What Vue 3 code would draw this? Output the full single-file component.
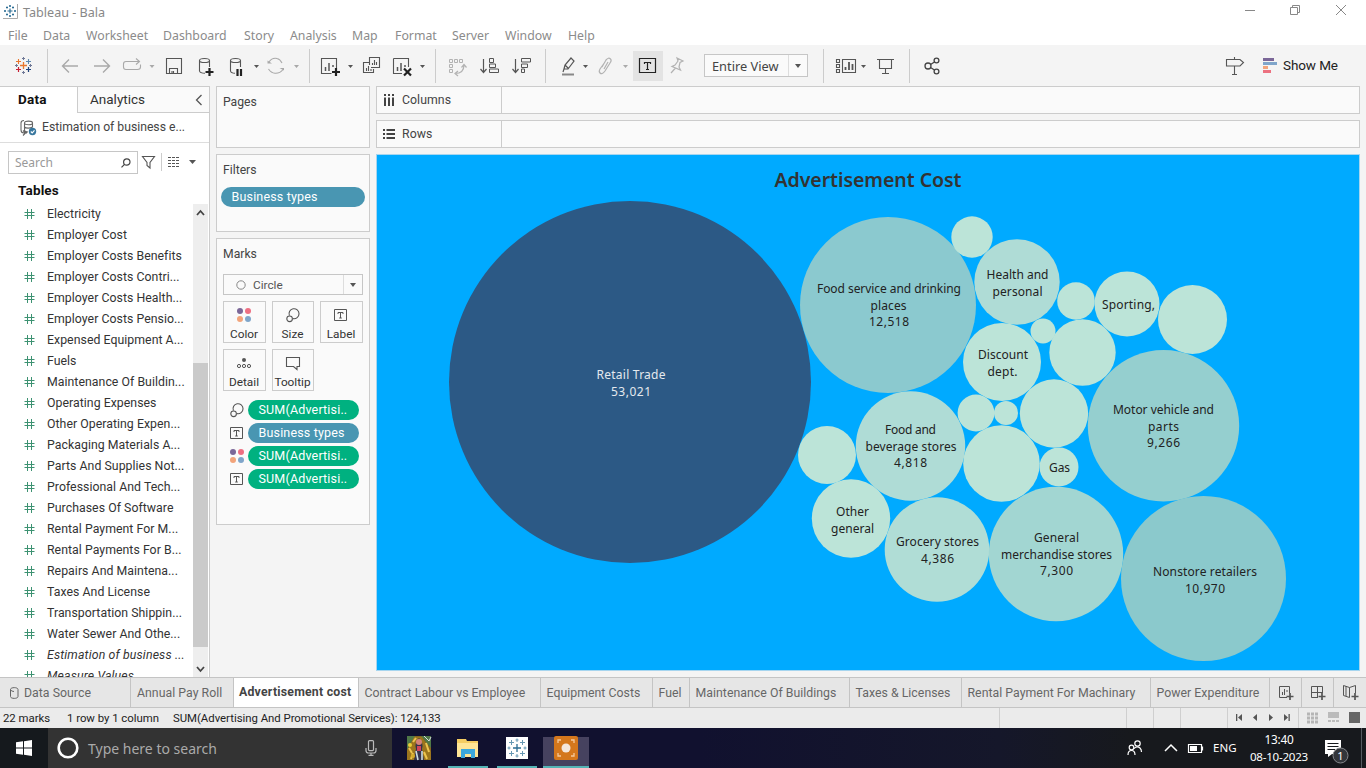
<script setup>
const menus = [
  ['File', 35], ['Data', 43], ['Worksheet', 77], ['Dashboard', 81], ['Story', 46], ['Analysis', 62],
  ['Map', 43], ['Format', 57], ['Server', 53], ['Window', 63], ['Help', 40],
]
const fields = [
  'Electricity', 'Employer Cost', 'Employer Costs Benefits', 'Employer Costs Contri...',
  'Employer Costs Health...', 'Employer Costs Pensio...', 'Expensed Equipment A...', 'Fuels',
  'Maintenance Of Buildin...', 'Operating Expenses', 'Other Operating Expen...',
  'Packaging Materials A...', 'Parts And Supplies Not...', 'Professional And Tech...',
  'Purchases Of Software', 'Rental Payment For M...', 'Rental Payments For B...',
  'Repairs And Maintena...', 'Taxes And License', 'Transportation Shippin...',
  'Water Sewer And Othe...', 'Estimation of business ...', 'Measure Values',
]
const bubbles = [
  [630, 382, 181, '#2c5985'], [888, 305, 88, '#8bc9cf'], [972, 237, 20.7, '#bce4d8'],
  [1017, 282, 42.7, '#afdcd6'], [1076, 301, 18.8, '#bce4d8'], [1127, 304, 32.5, '#bce4d8'],
  [1192.5, 319.5, 34.5, '#bce4d8'], [1043, 331, 12.5, '#bce4d8'], [1082.5, 352.5, 33.2, '#bce4d8'],
  [1002, 362, 39, '#bce4d8'], [1054, 413.5, 34.2, '#bce4d8'], [1006, 413, 12, '#bce4d8'],
  [976, 413, 18.4, '#bce4d8'], [1001.5, 463.5, 38.3, '#bce4d8'], [1059, 467, 19.5, '#bce4d8'],
  [1163.5, 425.7, 75.7, '#95cfcf'], [910.5, 446, 54.7, '#afdcd6'], [827, 455, 29, '#bce4d8'],
  [851, 518.5, 39.2, '#bce4d8'], [937, 549.5, 52.3, '#b0ddd6'], [1056, 554, 67.2, '#a2d6d2'],
  [1203.5, 578.5, 82.5, '#8bc9cc'],
]
const labels = [
  ['Retail Trade', 631, 379, 69, 1], ['53,021', 631, 396, 40, 1],
  ['Food service and drinking', 889, 293, 144], ['places', 888.5, 310, 36], ['12,518', 889, 326, 40],
  ['Health and', 1017.5, 279, 62], ['personal', 1017.5, 296, 50],
  ['Sporting,', 1128.5, 309, 53], ['Discount', 1003, 359, 50], ['dept.', 1002.5, 376, 30],
  ['Motor vehicle and', 1163.5, 414, 101], ['parts', 1163.5, 431, 31], ['9,266', 1163.5, 447, 33],
  ['Food and', 910.5, 434, 51], ['beverage stores', 911, 451, 91], ['4,818', 910.5, 467, 33],
  ['Gas', 1059.5, 472, 21], ['Other', 852.5, 516, 33], ['general', 852.5, 533, 43],
  ['Grocery stores', 937.5, 546, 83], ['4,386', 937.5, 563, 33],
  ['General', 1056.5, 542, 45], ['merchandise stores', 1056.5, 559, 111], ['7,300', 1056.5, 575, 33],
  ['Nonstore retailers', 1205, 576, 104], ['10,970', 1205, 593, 40],
]
const pills = [
  ['size', 'SUM(Advertisi..', true], ['label', 'Business types', false],
  ['color', 'SUM(Advertisi..', true], ['label', 'SUM(Advertisi..', true],
]
const marks = [['color', 'Color'], ['size', 'Size'], ['label', 'Label'], ['detail', 'Detail'], ['tooltip', 'Tooltip']]
const tabs = [
  ['Annual Pay Roll', 103], ['Advertisement cost', 125], ['Contract Labour vs Employee', 182],
  ['Equipment Costs', 112], ['Fuel', 37], ['Maintenance Of Buildings', 160], ['Taxes & Licenses', 112],
  ['Rental Payment For Machinary', 189], ['Power Expenditure', 119],
]
</script>

<template>
  <div class="screen">
    <svg class="defs" width="0" height="0">
      <symbol id="g-color" viewBox="0 0 16 16">
        <circle cx="4" cy="4" r="3" fill="#7b6798" /><circle cx="12" cy="4" r="3" fill="#ee6f82" />
        <circle cx="4" cy="12" r="3" fill="#f2a47b" /><circle cx="12" cy="12" r="3" fill="#7fa5ca" />
      </symbol>
      <symbol id="g-size" viewBox="0 0 16 16">
        <path d="M4.4 8.6A5 5 0 1 1 8 11.6" fill="none" stroke="#555" stroke-width="1.1" />
        <circle cx="4.600" cy="11.800" r="2.800" fill="none" stroke="#555" stroke-width="1.1" />
      </symbol>
      <symbol id="g-label" viewBox="0 0 16 16">
        <path d="M1.500 2.500H13.500V13.500H1.500ZM5 7V5.500H10V7M7.500 5.500V11M6.200 11H8.800" fill="none" stroke="#555" />
      </symbol>
      <symbol id="g-detail" viewBox="0 0 16 16">
        <circle cx="8" cy="5" r="2" fill="#555" />
        <g fill="none" stroke="#555"><circle cx="3" cy="11" r="1.600" /><circle cx="8" cy="11" r="1.600" /><circle cx="13" cy="11" r="1.600" /></g>
      </symbol>
      <symbol id="g-tooltip" viewBox="0 0 16 16">
        <path d="M1.500 2.500H14.500V11.500H12V14.500L8.500 11.500H1.500Z" fill="none" stroke="#555" stroke-width="1.1" />
      </symbol>
    </svg>

    <header class="titlebar">
      <svg class="applogo" width="15" height="15" viewBox="0 0 15 15">
        <path d="M0 14.500H14.500V0" fill="none" stroke="#aaa" />
        <path d="M7 4.500V9.500M4.500 7H9.500M7 1V3M6 2H8M7 11V13M6 12H8M2 6V8M1 7H3M12 6V8M11 7H13M4 2.500V4.500M3 3.500H5M10 2.500V4.500M9 3.500H11M4 9.500V11.500M3 10.500H5M10 9.500V11.500M9 10.500H11" stroke="#2b6d94" stroke-width="1.200" fill="none" />
      </svg>
      <span class="apptitle">Tableau - Bala</span>
      <svg class="winctl" width="126" height="24" viewBox="1240 0 126 24" fill="none" stroke="#888">
        <path d="M1245 10.500H1255M1290.500 7.500H1297.500V14.500H1290.500ZM1292.500 7V5.500H1299.500V12.500H1298M1336 5L1346 15M1346 5L1336 15" />
      </svg>
    </header>

    <nav class="menubar">
      <span v-for="m in menus" :key="m[0]" :style="{ width: m[1] + 'px' }">{{ m[0] }}</span>
    </nav>

    <div class="toolbar">
      <svg width="48" height="41" viewBox="0 45 48 41" fill="none">
        <path d="M23.500 62V69M20 65.500H27" stroke="#e8762d" stroke-width="1.300" />
        <path d="M18.500 59V64M16 61.500H21M28.500 67V72M26 69.500H31" stroke="#e8762d" stroke-width="1.100" />
        <path d="M18.500 67V72M16 69.500H21" stroke="#c72035" stroke-width="1.200" />
        <path d="M28.500 59V64M26 61.500H31" stroke="#5c86ad" stroke-width="1.100" />
        <path d="M28.500 67V72M26 69.500H31" stroke="#1f447e" stroke-width="1.200" />
        <path d="M23.500 57V60M22 58.500H25M23.500 71V74M22 72.500H25M16.500 64V67M15 65.500H18M30.500 64V67M29 65.500H32" stroke="#6f7896" />
        <path d="M47.500 49V83" stroke="#ccc" />
      </svg>
      <svg width="262" height="41" viewBox="48 45 262 41" fill="none">
        <g stroke="#a9a9a9" stroke-width="1.400">
          <path d="M78 66H63M69 59.500L62.500 66L69 72.500M94 66H109M103 59.500L109.500 66L103 72.500" />
          <path d="M130 61.500H126Q123.500 61.500 123.500 64V67Q123.500 69.500 126 69.500H137.500Q140.500 69.500 140.500 67V64.500M130 61.500H139M136 58.500L139.500 61.500L136 64.500" stroke-width="1.100" />
          <path d="M269 62Q272 57.500 277 58.500Q280 59 282 63M283 69.500Q280 73.500 275 73.200Q271 73 268.500 69" stroke-width="1.100" />
        </g>
        <g fill="#a9a9a9"><path d="M267.500 60.500L272 63.500H267.500ZM284 70.500L279.500 68H284Z" /><path d="M149.500 65h5l-2.500 3zM294 65h5l-2.500 3z" /></g>
        <path d="M254 65h5l-2.500 3z" fill="#555" />
        <g stroke="#555" stroke-width="1.100">
          <path d="M166.500 58.500H181.500V73.500H166.500ZM169.500 73V68.500H177.500V73M172 73V71M173.500 73V71" />
          <path d="M199.500 60.500C199.500 57.800 209.500 57.800 209.500 60.500C209.500 63.200 199.500 63.200 199.500 60.500V71Q200 73.200 205 73.200M209.500 60.500V67" />
          <path d="M230.500 60.500C230.500 57.800 240.500 57.800 240.500 60.500C240.500 63.200 230.500 63.200 230.500 60.500V71Q231 73.200 235 73.200M240.500 60.500V67" />
        </g>
        <path d="M209.500 68V76M205.500 72H213.500M237.500 69V76M241 69V76" stroke="#222" stroke-width="2.200" />
        <path d="M309.500 49V83" stroke="#ccc" />
      </svg>
      <svg width="126" height="41" viewBox="310 45 126 41" fill="none">
        <g stroke="#555" stroke-width="1.100">
          <path d="M331.500 73.500H321.500V58.500H336.500V68M393.500 58.500H408.500V67M402 73.500H393.500V58.500" />
          <path d="M371 67.500H379.500V57.500H369.500V65M369 62.500H363.500V72.500H373.500V69" />
          <path d="M372.500 65V63M374.500 65V60M376.500 65V62M366.500 71V68M368.500 71V66M371 71V69" />
        </g>
        <path d="M325.500 71V67M329 71V63M333 67V65M397.500 71V67M401 71V63M405 67V65" stroke="#555" stroke-width="1.500" />
        <path d="M336 68V76M332 72H340M404 68.500L411 75.500M411 68.500L404 75.500" stroke="#222" stroke-width="2.200" />
        <path d="M348 65h5l-2.500 3zM420 65h5l-2.500 3z" fill="#555" />
        <path d="M435.500 49V83" stroke="#ccc" />
      </svg>
      <svg width="110" height="41" viewBox="436 45 110 41" fill="none">
        <g stroke="#b2b2b2">
          <path d="M449.500 59.500h3v3h-3zM454.500 59.500h3v3h-3zM459.500 59.500h3v3h-3zM449.500 64.500h3v3h-3zM449.500 69.500h3v3h-3z" />
          <path d="M464 65Q464 73.500 455 73.500M461.500 67.500L464 64.500L466.500 67.500M458 71L455 73.500L458 76" stroke-width="1.200" />
        </g>
        <g stroke="#555" stroke-width="1.200">
          <path d="M483.500 59V72M480.500 69L483.500 72.500L486.500 69M515.500 59V72M512.500 69L515.500 72.500L518.500 69" />
          <path d="M489.500 58.500h4v4h-4zM489.500 64h6v3.500h-6zM489.500 69h9v3.500h-9zM521.500 58.500h9v3.500h-9zM521.500 64h6v3.500h-6zM521.500 69h3v3.500h-3z" stroke-width="1" />
        </g>
        <path d="M545.500 49V83" stroke="#ccc" />
      </svg>
      <svg width="158" height="41" viewBox="546 45 158 41" fill="none">
        <path d="M633 51H663V81H633Z" fill="#e3e3e3" />
        <path d="M564 69L565 65L571 58L574 61L568 69ZM565 65L568.500 68.500M564 69L563 72" stroke="#555" stroke-width="1.200" />
        <path d="M562 74.500H574" stroke="#888" stroke-width="2" />
        <path d="M583 65h5l-2.500 3z" fill="#555" /><path d="M623 65h5l-2.500 3z" fill="#aaa" />
        <path d="M602 67L606 60Q608.500 57 610.500 59Q612 60.500 610 63L605 71Q602 75 600 73Q598.500 71.500 600 69L605 62M604 69L608 62" stroke="#b2b2b2" stroke-width="1.200" />
        <path d="M639.500 58.500H655.500V72.500H639.500ZM644.500 64V62.500H650.500V64M647.500 62.500V69.500M646 69.500H649" stroke="#222" stroke-width="1.200" />
        <path d="M677 58L683 61L680 62.500L679 67L680.500 70L672 66.500L675 65L678 61ZM675.500 68L671 73" stroke="#b2b2b2" stroke-width="1.200" />
      </svg>
      <div class="viewselect"><span>Entire View</span><i></i></div>
      <svg width="102" height="41" viewBox="808 45 102 41" fill="none">
        <path d="M823.500 49V83M909.500 49V83" stroke="#ccc" />
        <path d="M836.500 59.500h3v3h-3zM836.500 64.500h3v3h-3zM836.500 69.500h3v3h-3zM842.500 59.500H855.500V72.500H842.500ZM877 59.500H894M879.500 60V68.500H891.500V60M885.500 69V73M882 73.500H889" stroke="#555" stroke-width="1.100" />
        <path d="M845.500 70V67M849 70V62M852.500 70V64" stroke="#555" stroke-width="1.800" />
        <path d="M861 65h5l-2.500 3z" fill="#555" />
      </svg>
      <svg width="310" height="41" viewBox="910 45 310 41" fill="none">
        <g stroke="#444" stroke-width="1.300"><circle cx="928" cy="66" r="3" /><circle cx="936.500" cy="60.500" r="2.400" /><circle cx="936.500" cy="71.500" r="2.400" /><path d="M930.500 64.500L934.500 62M930.500 67.500L934.500 70" /></g>
      </svg>
      <svg width="63" height="41" viewBox="1220 45 63 41" fill="none">
        <path d="M1234.500 57V59M1226.500 59.500H1240L1243.500 62.500L1240 66H1226.500ZM1234.500 66V74M1232 74.500H1237" stroke="#555" stroke-width="1.100" />
        <path d="M1263 58h11v3h-11z" fill="#7b6798" /><path d="M1263 62h14v3h-14z" fill="#7fa5ca" /><path d="M1263 66h5v3h-5z" fill="#f2a47b" /><path d="M1263 70h8v3h-8z" fill="#ec7180" />
      </svg>
      <span class="showme">Show Me</span>
    </div>

    <main class="work">
      <aside class="side">
        <div class="sidetabs"><b>Data</b><span>Analytics</span>
          <svg width="14" height="26" viewBox="0 0 14 26" fill="none"><path d="M6.500 8L1.500 13L6.500 18" stroke="#555" stroke-width="1.300" /><path d="M0 25.500H14" stroke="#ccc" /></svg>
        </div>
        <div class="source">
          <svg width="17" height="17" viewBox="0 0 17 17" fill="none" stroke="#666" stroke-width="1.100">
            <path d="M4.500 4C4.500 1.500 12.500 1.500 12.500 4C12.500 6.300 4.500 6.300 4.500 4V8C6 9.500 10 9.500 12.500 8V4M4 1.500Q1 1.500 1 4V11Q1 14 4 14H7M4.500 8V11.500Q5 13 8 13M3 11.500L5.500 14L3 16.500" />
            <circle cx="12.500" cy="12.500" r="3.700" fill="#38779e" stroke="none" /><path d="M10.800 12.500L12.200 13.900L14.500 11.300" stroke="#fff" />
          </svg>
          <span>Estimation of business e...</span>
        </div>
        <div class="searchrow">
          <div class="search"><span>Search</span>
            <svg width="10" height="10" viewBox="0 0 10 10" fill="none" stroke="#444" stroke-width="1.200"><circle cx="5.800" cy="4" r="3.200" /><path d="M3.500 6.300L.5 9.300" /></svg>
          </div>
          <svg width="60" height="22" viewBox="138 151 60 22" fill="none">
            <path d="M142.500 156.500H154.500L150 162.500V168L147 165.500V162.500Z" stroke="#555" stroke-width="1.100" />
            <path d="M161.500 153V171" stroke="#ccc" />
            <path d="M168 157.500H180M168 160.500H180M168 163.500H180M168 166.500H180" stroke="#555" stroke-dasharray="3 1" />
            <path d="M189 160h7l-3.500 4z" fill="#555" />
          </svg>
        </div>
        <h3>Tables</h3>
        <div class="listwrap">
          <ul>
            <li v-for="(f, i) in fields" :key="f" :class="{ calc: i > 20 }">
              <svg width="11" height="10" viewBox="0 0 11 10"><path d="M3.500 0V10M7.500 0V10M.5 3.500H10.500M.5 6.500H10.500" stroke="#3d9272" fill="none" /></svg>
              <span>{{ f }}</span>
            </li>
          </ul>
          <div class="scroll">
            <svg width="15" height="16" viewBox="0 0 15 16"><path d="M4 11L7.500 7L11 11" fill="none" stroke="#444" stroke-width="1.800" /></svg>
            <div class="thumb"></div>
            <svg width="15" height="16" viewBox="0 0 15 16"><path d="M4 6L7.500 10L11 6" fill="none" stroke="#444" stroke-width="1.800" /></svg>
          </div>
        </div>
      </aside>

      <section class="cards">
        <div class="card pages"><h4>Pages</h4></div>
        <div class="card filters"><h4>Filters</h4><div class="pill dim">Business types</div></div>
        <div class="card marks">
          <h4>Marks</h4>
          <div class="marktype"><svg width="10" height="10" viewBox="0 0 10 10"><circle cx="5" cy="5" r="4.200" fill="none" stroke="#888" /></svg><span>Circle</span><i></i></div>
          <div class="markgrid">
            <div v-for="m in marks" :key="m[0]" class="markbtn"><svg width="16" height="16"><use :href="'#g-' + m[0]" /></svg><span>{{ m[1] }}</span></div>
          </div>
          <div v-for="(p, i) in pills" :key="i" class="shelf">
            <svg width="16" height="16"><use :href="'#g-' + p[0]" /></svg>
            <div class="pill" :class="p[2] ? 'mea' : 'dim'">{{ p[1] }}</div>
          </div>
        </div>
      </section>

      <section class="view">
        <div class="rail"><div class="railname">
          <svg width="12" height="12" viewBox="0 0 12 12"><path d="M2 0V2M6 0V2M10 0V2M2 3.500V12M6 3.500V12M10 3.500V12" stroke="#444" stroke-width="2" /></svg>Columns</div></div>
        <div class="rail"><div class="railname">
          <svg width="12" height="12" viewBox="0 0 12 12"><path d="M0 2H2M0 6H2M0 10H2M3.500 2H12M3.500 6H12M3.500 10H12" stroke="#444" stroke-width="2" /></svg>Rows</div></div>
        <div class="canvas">
          <svg width="982" height="515" viewBox="377 155 982 515">
            <text class="charttitle" x="868" y="187" textLength="187" text-anchor="middle">Advertisement Cost</text>
            <circle v-for="(b, i) in bubbles" :key="i" :cx="b[0]" :cy="b[1]" :r="b[2]" :fill="b[3]" />
            <text v-for="(l, i) in labels" :key="'t' + i" class="lab" :class="{ light: l[4] }" :x="l[1]" :y="l[2]" :textLength="l[3]" text-anchor="middle">{{ l[0] }}</text>
          </svg>
        </div>
      </section>
    </main>

    <div class="tabs">
      <div class="tab ds"><svg width="9" height="12" viewBox="0 0 9 12" fill="none" stroke="#666"><path d="M.5 2.500C.5 0 8 0 8 2.500V9.500C8 12 .5 12 .5 9.500ZM.5 2.500Q1 4.500 4 4.500" /></svg>Data Source</div>
      <div v-for="(t, i) in tabs" :key="t[0]" class="tab" :class="{ on: i === 1 }" :style="{ width: t[1] + 'px' }">{{ t[0] }}</div>
      <svg width="96" height="30" viewBox="1270 678 96 30" fill="none" stroke="#555">
        <path d="M1301.500 678V708M1333.500 678V708" stroke="#c4c4c4" />
        <path d="M1287 697.500H1279.500V686.500H1289.500V693M1282.500 695V692M1284.500 695V689M1287 692V690" />
        <path d="M1318 697.500H1311.500V686.500H1322.500V693M1317.500 686.500V697M1311.500 692.500H1322" />
        <path d="M1349.500 687.500L1343.500 685.500V695.500L1349.500 697.500ZM1349.500 687.500L1355.500 685.500V693M1346 686V696" />
        <path d="M1290 693V700M1286.500 696.500H1293.500M1322 693V700M1318.500 696.500H1325.500M1355 693V700M1351.500 696.500H1358.500" stroke-width="1.700" />
      </svg>
    </div>

    <div class="status">
      <span class="s1">22 marks</span><span class="s2">1 row by 1 column</span><span class="s3">SUM(Advertising And Promotional Services): 124,133</span>
      <svg width="367" height="20" viewBox="999 708 367 20">
        <path d="M999.500 708V728M1126.500 708V728M1153.500 708V728M1180.500 708V728M1227.500 708V728M1298.500 708V728" stroke="#cfcfcf" fill="none" />
        <g fill="#555"><path d="M1236 714h1.300v7h-1.300zM1242 714v7l-4-3.500zM1257 714v7l-4-3.500zM1269 714v7l4-3.500zM1284 714v7l4-3.500zM1288.500 714h1.300v7h-1.300z" /></g>
        <path d="M1307 714H1318M1307 718H1318M1307 722H1318" stroke="#b5b5b5" stroke-width="3" stroke-dasharray="3 1" />
        <path d="M1328 712h11v6h-11z" fill="#bbb" /><path d="M1328 721H1339" stroke="#bbb" stroke-width="2" stroke-dasharray="3 1" />
        <path d="M1349 712h11v11h-11z" fill="#666" />
      </svg>
    </div>

    <footer class="taskbar">
      <div class="start"><svg width="16" height="16" viewBox="0 0 16 16" fill="#fff"><path d="M0 2.300L7 1.300V7.500H0ZM8 1.200L16 0V7.500H8ZM0 8.500H7V14.700L0 13.700ZM8 8.500H16V16L8 14.800Z" /></svg></div>
      <div class="cortana">
        <svg width="22" height="22" viewBox="0 0 22 22"><circle cx="11" cy="11" r="9.300" fill="none" stroke="#fff" stroke-width="2.600" /></svg>
        <span>Type here to search</span>
        <svg width="12" height="16" viewBox="0 0 12 16" fill="none" stroke="#bbb" stroke-width="1.200"><rect x="3.500" y=".6" width="5" height="10" rx="1" /><path d="M1 8V10.500Q1 13 3.500 13H8.500Q11 13 11 10.500V8M6 13V15M3.500 15.400H8.500" /></svg>
      </div>
      <svg width="208" height="40" viewBox="392 728 208 40">
        <path d="M407 736h24v24h-24z" fill="#8a651d" />
        <path d="M407 736h8l-8 14zM421 736h10v12z" fill="#507848" /><path d="M407 760v-9l7-14h8l9 15v8z" fill="#9b751e" />
        <path d="M413 742l3-4M409 748l3 5M426 743l3 9M413 753l-2 6M424 752l3 7" stroke="#edc44f" stroke-width="2" />
        <path d="M419 738q5 5 3 11l2 11h-10l2-11q-2-6 3-11" fill="#35334b" /><circle cx="419" cy="742" r="3" fill="#d68479" />
        <path d="M417 746h4v5h-4z" fill="#d2445b" /><path d="M416 751l2 9M422 751v9" stroke="#cddbe1" stroke-width="1.600" />
        <circle cx="410" cy="745" r="2" fill="#e9cd35" /><circle cx="413" cy="756" r="2" fill="#d4aa2b" /><path d="M424 736l5 5 2-4" stroke="#d7dddc" fill="none" />
        <path d="M457 739h9l1 2h11v16h-21z" fill="#f5cd62" /><path d="M457 743h21v14h-21z" fill="#ffe596" /><path d="M461 758v-9h14v9h-4v-4h-6v4z" fill="#3ca7dc" />
        <path d="M543 737h46v29h-46z" fill="#46425f" />
        <path d="M448 766h40v2h-40zM497 766h40v2h-40zM543 766h46v2h-46z" fill="#55b4b5" />
        <path d="M506 737h22v22h-22z" fill="#fff" />
        <path d="M517 744V752M513 748H521" stroke="#2b6d94" stroke-width="1.300" />
        <path d="M517 738.500V742M515.500 740H518.500M517 754V757.500M515.500 756H518.500M509 746.500V749.500M507.500 748H510.500M525 746.500V749.500M523.500 748H526.500M511.500 740V745M509 742.500H514M522.500 740V745M520 742.500H525M511.500 751V756M509 753.500H514M522.500 751V756M520 753.500H525" stroke="#6798b4" />
        <rect x="554" y="736" width="24" height="24" rx="2" fill="#d4771c" /><circle cx="566" cy="748" r="4.500" fill="#f4e7dc" />
        <path d="M558 743V740H561M571 740H574V743M574 753V756H571M561 756H558V753" fill="none" stroke="#f4c99b" stroke-width="1.300" />
      </svg>
      <div class="tray">
        <svg width="86" height="40" viewBox="1124 728 86 40" fill="none" stroke="#fff" stroke-width="1.200">
          <circle cx="1137.500" cy="743.500" r="2.700" /><circle cx="1131.500" cy="747.500" r="2.300" /><path d="M1128 755Q1128 750.500 1131.500 750.500T1135 755M1134 748.500Q1137 745.500 1140 748Q1141.500 749.500 1141.500 752" />
          <path d="M1165 751L1171 745L1177 751" stroke-width="1.500" />
          <path d="M1188.500 744.500H1201.500V752.500H1188.500ZM1202.500 746.500V750.500" /><path d="M1190 746h7v5h-7z" fill="#fff" stroke="none" />
        </svg>
        <span class="lang">ENG</span>
        <div class="clock"><span>13:40</span><span class="date">08-10-2023</span></div>
        <svg width="54" height="40" viewBox="1312 728 54 40">
          <path d="M1325 740h16v14h-9l-4 3v-3h-3z" fill="#fff" /><path d="M1327.500 743.500H1338.500M1327.500 746.500H1338.500M1327.500 749.500H1335" stroke="#17191d" />
          <circle cx="1340.500" cy="755.500" r="7.500" fill="#33363b" stroke="#84878b" /><text class="badge" x="1340.500" y="760" text-anchor="middle">1</text>
          <path d="M1361.500 728V768" stroke="#555a60" />
        </svg>
      </div>
    </footer>
  </div>
</template>

<style>
body { overflow: hidden; }
</style>

<style scoped>
* { box-sizing: border-box; }
svg { display: block; flex: none; }
.defs { position: absolute; }
.screen { width: 1366px; height: 768px; display: flex; flex-direction: column; background: #f4f4f4; font: 12px/16px Roboto, "Liberation Sans", sans-serif; color: #333; white-space: nowrap; overflow: hidden; }
.titlebar { height: 24px; background: #fff; display: flex; font: 12.6px/25px "Noto Sans", sans-serif; color: #888; }
.applogo { margin: 4px 5px 0 3px; }
.winctl { margin-left: auto; }
.menubar { height: 21px; background: #fff; display: flex; padding-left: 8px; font: 12.3px/24px "Noto Sans", sans-serif; color: #8b8b8b; }
.toolbar { height: 41px; display: flex; background: #f4f4f4; }
.viewselect { width: 104px; height: 23px; margin-top: 9px; border: 1px solid #c6c6c6; background: #fafafa; display: flex; align-items: center; padding-left: 7px; font: 12.8px/20px "Noto Sans", sans-serif; color: #444; }
.viewselect span { width: 77px; }
.viewselect i { width: 19px; height: 21px; border-left: 1px solid #ddd; display: grid; place-items: center; }
.viewselect i::before, .marktype i::before { content: ""; border: 3.5px solid transparent; border-top: 4px solid #555; border-bottom: 0; }
.showme { font-size: 13.5px; line-height: 41px; color: #222; letter-spacing: -.1px; }
.work { height: 591px; display: flex; }
.side { width: 210px; background: #fff; border-top: 1px solid #ccc; border-right: 1px solid #ccc; display: flex; flex-direction: column; }
.sidetabs { height: 26px; display: flex; align-items: center; font-size: 13.5px; background: linear-gradient(90deg, #fff 77px, #fafafa 77px); }
.sidetabs b { width: 77px; padding-left: 18px; margin-top: -2px; color: #111; letter-spacing: .2px; }
.sidetabs span { width: 118px; height: 26px; line-height: 25px; padding-left: 12px; border-left: 1px solid #ccc; border-bottom: 1px solid #ccc; }
.source { height: 30px; display: flex; align-items: center; border-bottom: 1px solid #ddd; padding-left: 20px; font-size: 12.2px; line-height: 16px; color: #444; }
.source span { padding: 0 0 2px 5px; }
.searchrow { display: flex; padding: 8px 0 0 8px; height: 30px; }
.search { width: 130px; height: 23px; border: 1px solid #c6c6c6; display: flex; align-items: center; justify-content: space-between; padding: 0 6px; font: 12px/20px "Noto Sans", sans-serif; color: #999; }
h3 { margin: 0; height: 31px; padding: 8px 0 0 18px; font: bold 13.5px/18px Roboto, sans-serif; color: #111; letter-spacing: .15px; }
.listwrap { height: 473px; display: flex; overflow: hidden; }
ul { margin: -1px 0 0; padding: 0; list-style: none; width: 193px; }
li { height: 21px; display: flex; align-items: center; padding-left: 24px; font-size: 12.3px; line-height: 19px; color: #333; letter-spacing: .04px; }
li svg { margin-top: 1px; }
li span { padding: 2px 0 0 12px; }
.calc span { font-style: italic; letter-spacing: .15px; }
.scroll { width: 15px; height: 473px; background: #eee; display: flex; flex-direction: column; }
.thumb { height: 284px; margin-top: 143px; margin-bottom: 14px; background: #cacaca; }
.cards { width: 154px; margin-left: 6px; display: flex; flex-direction: column; gap: 6px; }
.card { border: 1px solid #ccc; background: #fafafa; }
h4 { margin: 0; padding: 7px 0 0 6px; font: 12.2px/17px Roboto, sans-serif; color: #444; }
.pages { height: 62px; }
.filters { height: 78px; }
.marks { height: 287px; }
.pill { height: 20px; border-radius: 10px; color: #fff; font-size: 12.5px; line-height: 20px; letter-spacing: .17px; padding-left: 10.5px; }
.filters .pill { margin: 8px 4px 0; }
.dim { background: #4996b2; }
.mea { background: #00b180; }
.marktype { width: 140px; height: 21px; margin: 11px 0 0 6px; border: 1px solid #c6c6c6; display: flex; align-items: center; padding-left: 12px; color: #555; font-size: 11.8px; }
.marktype span { padding-left: 7px; width: 92px; }
.marktype i { width: 19px; height: 19px; margin-left: auto; border-left: 1px solid #ddd; display: grid; place-items: center; }
.markgrid { display: grid; grid-template-columns: 43px 42px 43px; gap: 6px; margin: 6px 0 9px 6px; }
.markbtn { height: 42px; border: 1px solid #ccc; display: flex; flex-direction: column; align-items: center; padding: 5px 1px 0 0; color: #333; font-size: 11.8px; }
.markbtn span { line-height: 16px; margin-top: 3px; }
.shelf { display: flex; align-items: center; margin-bottom: 3px; padding-left: 12px; height: 20px; }
.shelf .pill { width: 111px; margin-left: 3px; }
.view { width: 984px; margin-left: 6px; display: flex; flex-direction: column; gap: 6px; }
.rail { height: 28px; border: 1px solid #ccc; background: #fafafa; }
.railname { width: 125px; height: 26px; border-right: 1px solid #ccc; display: flex; align-items: center; gap: 7px; padding-left: 6px; color: #444; font-size: 12.3px; letter-spacing: .05px; }
.canvas { height: 517px; border: 1px solid #a6d5ef; background: #0af; }
.charttitle { font: 600 19.5px "Noto Sans", sans-serif; fill: #333; }
.lab { font: 12px "Noto Sans", sans-serif; fill: #222; }
.lab.light { fill: #e4e9ee; }
.tabs { height: 31px; display: flex; background: #e6e6e6; border-top: 1px solid #c4c4c4; border-bottom: 1px solid #c4c4c4; overflow: hidden; }
.tab { flex: none; border-right: 1px solid #c4c4c4; line-height: 30px; padding-left: 6px; color: #666; font-size: 12.3px; letter-spacing: .03px; }
.tab:nth-child(n+4) { padding-left: 5.5px; }
.ds { width: 131px; display: flex; align-items: center; gap: 5px; padding-left: 10px; }
.on { background: #fff; color: #444; font-weight: bold; line-height: 28px; padding-left: 5px; letter-spacing: .22px; }
.status { height: 20px; background: #ebebeb; display: flex; line-height: 20px; color: #222; font-size: 11.4px; letter-spacing: -.03px; }
.s1 { width: 67px; padding-left: 3px; }
.s2 { width: 106px; }
.s3 { width: 826px; }
.taskbar { height: 40px; display: flex; background: linear-gradient(90deg, #11112f 0 700px, #15172a 1000px, #17191d 1130px); }
.start { width: 48px; background: #15191d; display: grid; place-items: center; }
.cortana { width: 344px; background: #333; display: flex; align-items: center; padding-left: 9px; color: #aaa; font: 14px/40px "Noto Sans", sans-serif; }
.cortana span { width: 286px; padding: 1px 0 0 9px; line-height: 39px; }
.tray { margin-left: auto; display: flex; align-items: center; width: 242px; color: #fff; font: 12px/18px "Noto Sans", sans-serif; }
.lang { width: 36px; padding-left: 3px; font-size: 11.5px; }
.clock { width: 66px; display: flex; flex-direction: column; align-items: center; font-size: 11.8px; letter-spacing: -.25px; }
.date { font-size: 11.6px; }
.badge { font: 11px "Noto Sans", sans-serif; fill: #fff; }
</style>
